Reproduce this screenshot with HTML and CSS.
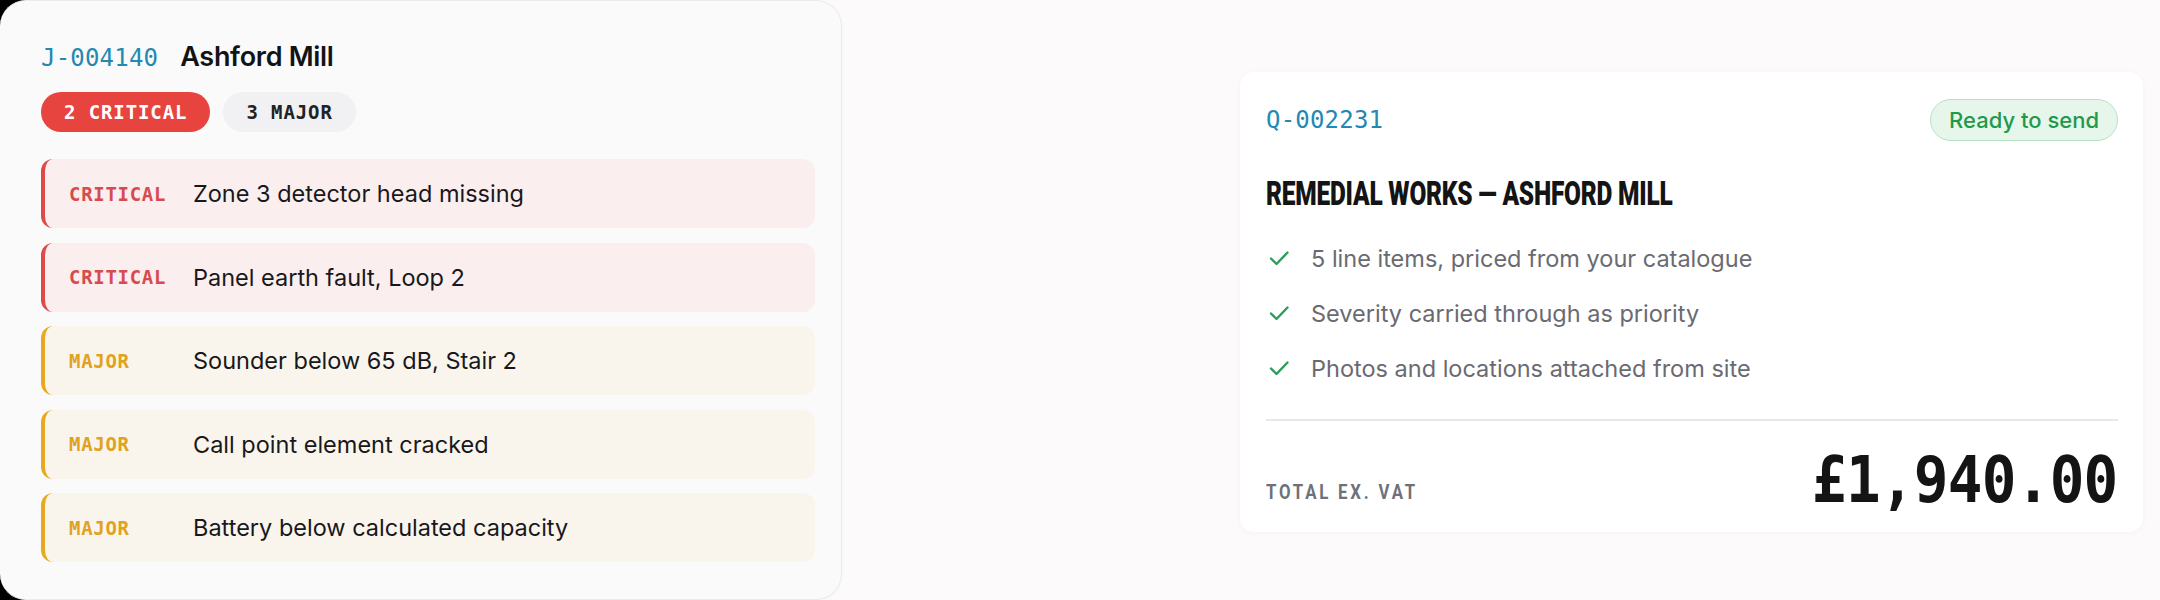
FILE: index.html
```html
<!DOCTYPE html>
<html lang="en">
<head>
<meta charset="utf-8">
<title>Ashford Mill</title>
<link rel="stylesheet" href="styles.css">
</head>
<body>
<div class="stage">
  <section class="job-card">
    <header class="job-head">
      <span class="code">J-004140</span>
      <span class="site">Ashford Mill</span>
    </header>
    <div class="badges">
      <span class="badge badge-critical">2 CRITICAL</span>
      <span class="badge badge-major">3 MAJOR</span>
    </div>
    <ul class="defects">
      <li class="defect critical"><span class="sev">CRITICAL</span><span class="desc">Zone 3 detector head missing</span></li>
      <li class="defect critical"><span class="sev">CRITICAL</span><span class="desc">Panel earth fault, Loop 2</span></li>
      <li class="defect major"><span class="sev">MAJOR</span><span class="desc">Sounder below 65 dB, Stair 2</span></li>
      <li class="defect major"><span class="sev">MAJOR</span><span class="desc">Call point element cracked</span></li>
      <li class="defect major"><span class="sev">MAJOR</span><span class="desc">Battery below calculated capacity</span></li>
    </ul>
  </section>
  <div class="right-area">
    <section class="quote-card">
      <div class="quote-head">
        <span class="code">Q-002231</span>
        <span class="status">Ready to send</span>
      </div>
      <h2 class="quote-title"><span>REMEDIAL WORKS — ASHFORD MILL</span></h2>
      <ul class="checks">
        <li><svg class="tick" viewBox="0 0 20 16" width="20" height="16"><path d="M2 8.5 L7.5 14 L18.5 2.5" fill="none" stroke="#2a9d5a" stroke-width="2.4" stroke-linecap="round" stroke-linejoin="round"/></svg><span>5 line items, priced from your catalogue</span></li>
        <li><svg class="tick" viewBox="0 0 20 16" width="20" height="16"><path d="M2 8.5 L7.5 14 L18.5 2.5" fill="none" stroke="#2a9d5a" stroke-width="2.4" stroke-linecap="round" stroke-linejoin="round"/></svg><span>Severity carried through as priority</span></li>
        <li><svg class="tick" viewBox="0 0 20 16" width="20" height="16"><path d="M2 8.5 L7.5 14 L18.5 2.5" fill="none" stroke="#2a9d5a" stroke-width="2.4" stroke-linecap="round" stroke-linejoin="round"/></svg><span>Photos and locations attached from site</span></li>
      </ul>
      <div class="total">
        <span class="total-label"><span>TOTAL EX. VAT</span></span>
        <span class="amount">£1,940.00</span>
      </div>
    </section>
  </div>
</div>
</body>
</html>
```

FILE: styles.css
```css
* { box-sizing: border-box; }
html, body { margin: 0; padding: 0; }
body {
  width: 2160px;
  height: 600px;
  overflow: hidden;
  font-family: "Inter", "Roboto", sans-serif;
  color: #16161a;
}
.stage {
  display: flex;
  width: 2160px;
  height: 600px;
  background: linear-gradient(90deg, #000 0, #000 40px, #fcfafa 40px);
}
.job-card {
  width: 842px;
  height: 600px;
  background: #fafafa;
  border: 1px solid #ebebeb;
  border-left: none;
  border-radius: 26px;
  padding: 39px 26px 0 41px;
  box-shadow: 0 1px 4px rgba(0,0,0,0.03);
}
.job-head {
  display: flex;
  align-items: baseline;
  gap: 22px;
  height: 38px;
}
.code {
  font-family: "DejaVu Sans Mono", monospace;
  font-size: 24px;
  color: #2389b3;
  letter-spacing: 0.2px;
}
.site {
  font-size: 27px;
  font-weight: 600;
  color: #131316;
  letter-spacing: -0.3px;
}
.badges {
  display: flex;
  gap: 13px;
  margin-top: 14px;
}
.badge {
  font-family: "DejaVu Sans Mono", monospace;
  font-weight: bold;
  font-size: 19px;
  height: 40px;
  line-height: 40px;
  padding: 0 23px;
  border-radius: 20px;
  letter-spacing: 0.9px;
}
.badge-critical { background: #e8443f; color: #fff; }
.badge-major { background: #f1f1f3; color: #222; }
.defects {
  list-style: none;
  margin: 27px 0 0;
  padding: 0;
  display: flex;
  flex-direction: column;
  gap: 14.6px;
}
.defect {
  height: 69px;
  display: grid;
  grid-template-columns: 100px 1fr;
  column-gap: 24px;
  align-items: center;
  padding-left: 24px;
  border-radius: 12px;
  border-left: 4px solid;
}
.defect.critical { background: #fbeeee; border-left-color: #dd4a4a; }
.defect.major { background: #faf5ec; border-left-color: #e8a922; }
.sev {
  font-family: "DejaVu Sans Mono", monospace;
  font-size: 19px;
  font-weight: bold;
  letter-spacing: 0.7px;
}
.critical .sev { color: #d74b4e; }
.major .sev { color: #e0a21f; }
.desc {
  font-size: 23.5px;
  color: #18181c;
  letter-spacing: 0;
}
.right-area {
  flex: 1;
  display: flex;
  justify-content: flex-end;
  align-items: flex-start;
  padding: 72px 17px 0 0;
}
.quote-card {
  width: 903px;
  height: 460px;
  background: #fff;
  border-radius: 14px;
  box-shadow: 0 1px 6px rgba(0,0,0,0.035);
  padding: 27px 25px 0 26px;
}
.quote-head {
  display: flex;
  justify-content: space-between;
  align-items: center;
  height: 42px;
}
.status {
  height: 42px;
  line-height: 40px;
  padding: 0 18px;
  border-radius: 21px;
  background: #e7f6ea;
  border: 1px solid #b7e2c2;
  color: #1f9a4c;
  font-size: 22px;
  font-weight: 500;
}
.quote-title {
  margin: 35px 0 0;
  height: 34px;
  line-height: 34px;
  font-family: "Roboto", sans-serif;
  font-weight: 900;
  font-size: 34px;
  color: #141414;
  white-space: nowrap;
}
.quote-title span {
  display: inline-block;
  transform: scaleX(0.72);
  transform-origin: left center;
  letter-spacing: -0.3px;
}
.checks {
  list-style: none;
  margin: 32px 0 0;
  padding: 0;
  display: flex;
  flex-direction: column;
  gap: 23px;
}
.checks li {
  display: flex;
  align-items: center;
  gap: 22px;
  height: 32px;
  font-size: 23.5px;
  color: #6a6a72;
  letter-spacing: 0;
}
.tick { flex: none; margin-left: 3px; }
.total {
  margin-top: 35px;
  border-top: 2px solid #e8e8e8;
  display: flex;
  justify-content: space-between;
  align-items: flex-end;
  padding-top: 23px;
}
.total-label {
  font-family: "Roboto", sans-serif;
  font-weight: 700;
  font-size: 21px;
  color: #6d7179;
  letter-spacing: 3.5px;
  padding-bottom: 12px;
  white-space: nowrap;
}
.total-label span {
  display: inline-block;
  transform: scaleX(0.8);
  transform-origin: left center;
}
.amount {
  display: inline-block;
  font-family: "DejaVu Sans Mono", monospace;
  font-weight: bold;
  font-size: 64px;
  line-height: 72px;
  color: #141414;
  letter-spacing: -0.8px;
  transform: scaleX(0.9);
  transform-origin: right center;
}
```
